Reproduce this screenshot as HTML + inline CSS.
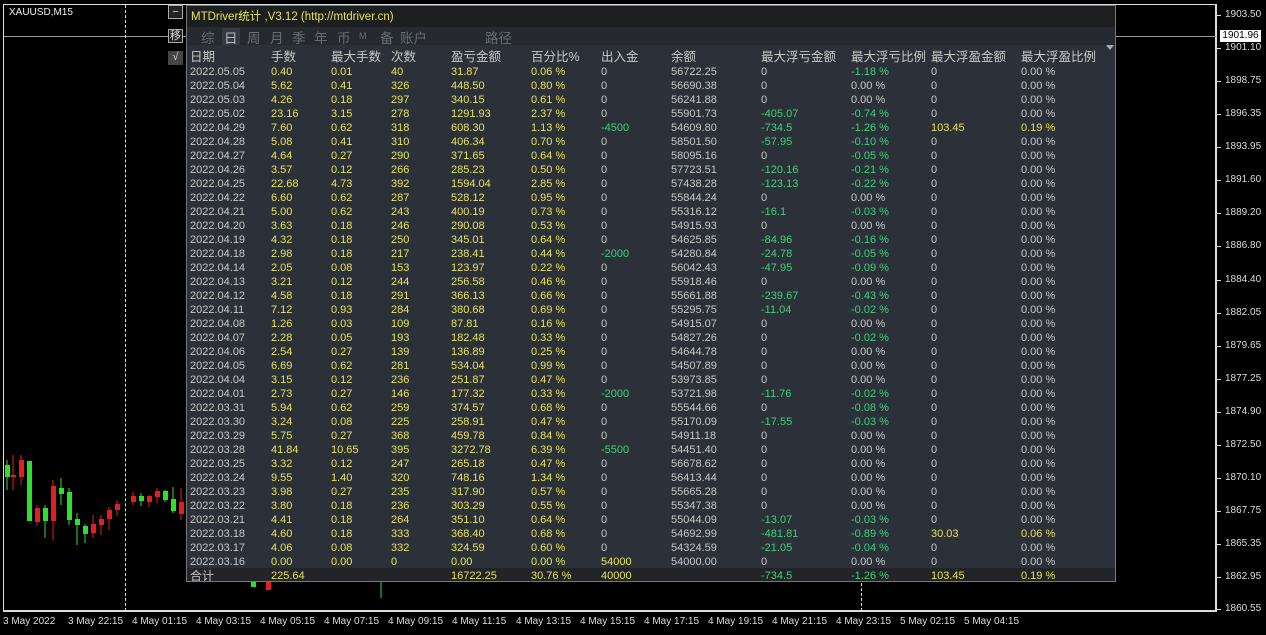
<!DOCTYPE html><html><head><meta charset="utf-8"><style>
body{margin:0;width:1266px;height:635px;background:#000;overflow:hidden;position:relative;font-family:"Liberation Sans","Noto Sans CJK SC",sans-serif;font-size:11px;color:#c8c8c8}
.abs{position:absolute}
#frame{left:3px;top:4px;width:1213px;height:607px;border:1px solid #ddd;position:absolute;box-sizing:border-box}
.pl{position:absolute;left:1225px;font-size:10px;color:#ddd}
.tk{position:absolute;left:1217px;width:4px;height:1px;background:#ddd}
.tl{position:absolute;top:616px;font-size:10px;color:#ddd;white-space:nowrap}
#panel{left:186px;top:5px;width:930px;height:577px;background:#2c3139;border:1px solid #777;box-sizing:border-box;position:absolute}
.r{position:absolute;left:0;height:14px;line-height:14px;width:928px;white-space:nowrap}
.r span{position:absolute}
.c1{left:3px}.c2{left:84px}.c3{left:144px}.c4{left:204px}.c5{left:264px}.c6{left:344px}.c7{left:414px}.c8{left:484px}.c9{left:574px}.c10{left:664px}.c11{left:744px}.c12{left:834px}
.y{color:#e4e45c}.g{color:#3fd07c}
.hd{font-size:12.5px;color:#c8c8c8}
.tb{position:absolute;top:21px;font-size:13.5px;color:#666c74}
.btn{position:absolute;left:168px;width:15px;height:14px;border:1px solid #aaa;color:#ddd;font-size:11px;text-align:center;line-height:13px;background:#222;box-sizing:border-box}
</style></head><body>
<div id="frame"></div>
<div class="abs" style="left:4px;top:36px;width:1212px;height:1px;background:#999"></div>
<div class="abs" style="left:125px;top:5px;height:606px;border-left:1px dashed #ddd"></div>
<div class="abs" style="left:861px;top:5px;height:606px;border-left:1px dashed #ddd"></div>
<div class="abs" style="left:9px;top:7px;color:#eee;font-size:10px">XAUUSD,M15</div>
<svg class="abs" style="left:0;top:440px" width="420" height="180">
<g stroke-width="1">
<line x1="7" y1="20" x2="7" y2="50" stroke="#2ee02e"/><rect x="5" y="25" width="5" height="12" fill="#2ee02e"/>
<line x1="13" y1="15" x2="13" y2="50" stroke="#e02020"/><rect x="11" y="35" width="5" height="2" fill="#e02020"/>
<line x1="21" y1="15" x2="21" y2="45" stroke="#e02020"/><rect x="19" y="20" width="5" height="17" fill="#e02020"/>
<rect x="27" y="21" width="5" height="60" fill="#2ee02e"/>
<line x1="37" y1="65" x2="37" y2="86" stroke="#e02020"/><rect x="35" y="68" width="5" height="14" fill="#e02020"/>
<line x1="45" y1="65" x2="45" y2="98" stroke="#2ee02e"/><rect x="43" y="68" width="5" height="13" fill="#2ee02e"/>
<line x1="53" y1="40" x2="53" y2="100" stroke="#e02020"/><rect x="51" y="46" width="5" height="35" fill="#e02020"/>
<line x1="61" y1="38" x2="61" y2="65" stroke="#2ee02e"/><rect x="59" y="48" width="5" height="6" fill="#2ee02e"/>
<line x1="69" y1="48" x2="69" y2="85" stroke="#2ee02e"/><rect x="67" y="52" width="5" height="28" fill="#2ee02e"/>
<line x1="77" y1="73" x2="77" y2="105" stroke="#2ee02e"/><rect x="75" y="79" width="5" height="6" fill="#2ee02e"/>
<line x1="85" y1="84" x2="85" y2="103" stroke="#2ee02e"/><rect x="83" y="86" width="5" height="8" fill="#2ee02e"/>
<line x1="93" y1="75" x2="93" y2="98" stroke="#e02020"/><rect x="91" y="84" width="5" height="9" fill="#e02020"/>
<line x1="101" y1="75" x2="101" y2="95" stroke="#e02020"/><rect x="99" y="79" width="5" height="6" fill="#e02020"/>
<line x1="109" y1="67" x2="109" y2="90" stroke="#e02020"/><rect x="107" y="70" width="5" height="9" fill="#e02020"/>
<line x1="117" y1="60" x2="117" y2="76" stroke="#e02020"/><rect x="115" y="64" width="5" height="6" fill="#e02020"/>
<line x1="133" y1="52" x2="133" y2="65" stroke="#e02020"/><rect x="131" y="56" width="5" height="6" fill="#e02020"/>
<line x1="141" y1="53" x2="141" y2="66" stroke="#2ee02e"/><rect x="139" y="56" width="5" height="5" fill="#2ee02e"/>
<line x1="149" y1="55" x2="149" y2="67" stroke="#e02020"/><rect x="147" y="56" width="5" height="6" fill="#e02020"/>
<line x1="157" y1="48" x2="157" y2="63" stroke="#e02020"/><rect x="155" y="51" width="5" height="6" fill="#e02020"/>
<line x1="165" y1="50" x2="165" y2="62" stroke="#2ee02e"/><rect x="163" y="51" width="5" height="9" fill="#2ee02e"/>
<line x1="173" y1="47" x2="173" y2="73" stroke="#2ee02e"/><rect x="171" y="59" width="5" height="12" fill="#2ee02e"/>
<line x1="181" y1="48" x2="181" y2="80" stroke="#e02020"/><rect x="179" y="62" width="5" height="12" fill="#e02020"/>
<rect x="251" y="142" width="5" height="5" fill="#2ee02e"/><rect x="266" y="142" width="5" height="8" fill="#e02020"/>
<line x1="381" y1="140" x2="381" y2="158" stroke="#2ee02e"/>
<line x1="630" y1="140" x2="630" y2="155" stroke="#2ee02e"/><line x1="637" y1="140" x2="637" y2="152" stroke="#e02020"/>
<line x1="780" y1="140" x2="780" y2="152" stroke="#e02020"/>
</g></svg>
<div class="abs" style="left:1216px;top:4px;width:1px;height:608px;background:#ddd"></div>
<div class="abs" style="left:3px;top:611px;width:1214px;height:1px;background:#ddd"></div>
<div class="tk" style="top:15px"></div><div class="pl" style="top:9px">1903.50</div>
<div class="abs" style="left:1220px;top:30px;width:41px;height:12px;background:#fff;color:#000;font-size:10px;line-height:12px;text-align:center">1901.96</div>
<div class="tk" style="top:48px"></div><div class="pl" style="top:42px">1901.10</div>
<div class="tk" style="top:81px"></div><div class="pl" style="top:75px">1898.75</div>
<div class="tk" style="top:114px"></div><div class="pl" style="top:108px">1896.35</div>
<div class="tk" style="top:147px"></div><div class="pl" style="top:141px">1893.95</div>
<div class="tk" style="top:180px"></div><div class="pl" style="top:174px">1891.60</div>
<div class="tk" style="top:213px"></div><div class="pl" style="top:207px">1889.20</div>
<div class="tk" style="top:246px"></div><div class="pl" style="top:240px">1886.80</div>
<div class="tk" style="top:280px"></div><div class="pl" style="top:274px">1884.40</div>
<div class="tk" style="top:313px"></div><div class="pl" style="top:307px">1882.05</div>
<div class="tk" style="top:346px"></div><div class="pl" style="top:340px">1879.65</div>
<div class="tk" style="top:379px"></div><div class="pl" style="top:373px">1877.25</div>
<div class="tk" style="top:412px"></div><div class="pl" style="top:406px">1874.90</div>
<div class="tk" style="top:445px"></div><div class="pl" style="top:439px">1872.50</div>
<div class="tk" style="top:478px"></div><div class="pl" style="top:472px">1870.10</div>
<div class="tk" style="top:511px"></div><div class="pl" style="top:505px">1867.75</div>
<div class="tk" style="top:544px"></div><div class="pl" style="top:538px">1865.35</div>
<div class="tk" style="top:577px"></div><div class="pl" style="top:571px">1862.95</div>
<div class="tk" style="top:609px"></div><div class="pl" style="top:603px">1860.55</div>
<div class="tl" style="left:3px">3 May 2022</div><div class="tl" style="left:68px">3 May 22:15</div><div class="tl" style="left:132px">4 May 01:15</div><div class="tl" style="left:196px">4 May 03:15</div><div class="tl" style="left:260px">4 May 05:15</div><div class="tl" style="left:324px">4 May 07:15</div><div class="tl" style="left:388px">4 May 09:15</div><div class="tl" style="left:452px">4 May 11:15</div><div class="tl" style="left:516px">4 May 13:15</div><div class="tl" style="left:580px">4 May 15:15</div><div class="tl" style="left:644px">4 May 17:15</div><div class="tl" style="left:708px">4 May 19:15</div><div class="tl" style="left:772px">4 May 21:15</div><div class="tl" style="left:836px">4 May 23:15</div><div class="tl" style="left:900px">5 May 02:15</div><div class="tl" style="left:964px">5 May 04:15</div>
<div class="btn" style="top:5px">−</div>
<div class="btn" style="top:29px">移</div>
<div class="btn" style="top:51px;border:none;background:#444">√</div>
<div id="panel">
<div class="abs" style="left:0;top:0;width:928px;height:21px;background:#1d1e20"></div>
<div class="abs" style="left:4px;top:2px;color:#e4e45c;font-size:11.5px">MTDriver统计 ,V3.12 (http://mtdriver.cn)</div>
<div class="abs" style="left:0;top:21px;width:928px;height:18px;background:#262a30"></div>
<div class="abs" style="left:35px;top:22px;width:18px;height:17px;background:#363b43"></div>
<span class="tb" style="left:14px">综</span><span class="tb" style="left:37px;color:#b8bcc2">日</span><span class="tb" style="left:60px">周</span><span class="tb" style="left:83px">月</span><span class="tb" style="left:105px">季</span><span class="tb" style="left:127px">年</span><span class="tb" style="left:150px">币</span><span class="tb" style="left:172px;font-size:9px;top:25px">M</span><span class="tb" style="left:193px">备</span><span class="tb" style="left:213px">账户</span><span class="tb" style="left:298px">路径</span>
<div class="abs" style="left:919px;top:39px;width:0;height:0;border-left:4px solid transparent;border-right:4px solid transparent;border-top:5px solid #aaa"></div>
<div class="r hd" style="top:44px"><span class="c1">日期</span><span class="c2">手数</span><span class="c3">最大手数</span><span class="c4">次数</span><span class="c5">盈亏金额</span><span class="c6">百分比%</span><span class="c7">出入金</span><span class="c8">余额</span><span class="c9">最大浮亏金额</span><span class="c10">最大浮亏比例</span><span class="c11">最大浮盈金额</span><span class="c12">最大浮盈比例</span></div>
<div class="r" style="top:59px"><span class="c1">2022.05.05</span><span class="c2 y">0.40</span><span class="c3 y">0.01</span><span class="c4 y">40</span><span class="c5 y">31.87</span><span class="c6 y">0.06 %</span><span class="c7">0</span><span class="c8">56722.25</span><span class="c9">0</span><span class="c10 g">-1.18 %</span><span class="c11">0</span><span class="c12">0.00 %</span></div>
<div class="r" style="top:73px"><span class="c1">2022.05.04</span><span class="c2 y">5.62</span><span class="c3 y">0.41</span><span class="c4 y">326</span><span class="c5 y">448.50</span><span class="c6 y">0.80 %</span><span class="c7">0</span><span class="c8">56690.38</span><span class="c9">0</span><span class="c10">0.00 %</span><span class="c11">0</span><span class="c12">0.00 %</span></div>
<div class="r" style="top:87px"><span class="c1">2022.05.03</span><span class="c2 y">4.26</span><span class="c3 y">0.18</span><span class="c4 y">297</span><span class="c5 y">340.15</span><span class="c6 y">0.61 %</span><span class="c7">0</span><span class="c8">56241.88</span><span class="c9">0</span><span class="c10">0.00 %</span><span class="c11">0</span><span class="c12">0.00 %</span></div>
<div class="r" style="top:101px"><span class="c1">2022.05.02</span><span class="c2 y">23.16</span><span class="c3 y">3.15</span><span class="c4 y">278</span><span class="c5 y">1291.93</span><span class="c6 y">2.37 %</span><span class="c7">0</span><span class="c8">55901.73</span><span class="c9 g">-405.07</span><span class="c10 g">-0.74 %</span><span class="c11">0</span><span class="c12">0.00 %</span></div>
<div class="r" style="top:115px"><span class="c1">2022.04.29</span><span class="c2 y">7.60</span><span class="c3 y">0.62</span><span class="c4 y">318</span><span class="c5 y">608.30</span><span class="c6 y">1.13 %</span><span class="c7 g">-4500</span><span class="c8">54609.80</span><span class="c9 g">-734.5</span><span class="c10 g">-1.26 %</span><span class="c11 y">103.45</span><span class="c12 y">0.19 %</span></div>
<div class="r" style="top:129px"><span class="c1">2022.04.28</span><span class="c2 y">5.08</span><span class="c3 y">0.41</span><span class="c4 y">310</span><span class="c5 y">406.34</span><span class="c6 y">0.70 %</span><span class="c7">0</span><span class="c8">58501.50</span><span class="c9 g">-57.95</span><span class="c10 g">-0.10 %</span><span class="c11">0</span><span class="c12">0.00 %</span></div>
<div class="r" style="top:143px"><span class="c1">2022.04.27</span><span class="c2 y">4.64</span><span class="c3 y">0.27</span><span class="c4 y">290</span><span class="c5 y">371.65</span><span class="c6 y">0.64 %</span><span class="c7">0</span><span class="c8">58095.16</span><span class="c9">0</span><span class="c10 g">-0.05 %</span><span class="c11">0</span><span class="c12">0.00 %</span></div>
<div class="r" style="top:157px"><span class="c1">2022.04.26</span><span class="c2 y">3.57</span><span class="c3 y">0.12</span><span class="c4 y">266</span><span class="c5 y">285.23</span><span class="c6 y">0.50 %</span><span class="c7">0</span><span class="c8">57723.51</span><span class="c9 g">-120.16</span><span class="c10 g">-0.21 %</span><span class="c11">0</span><span class="c12">0.00 %</span></div>
<div class="r" style="top:171px"><span class="c1">2022.04.25</span><span class="c2 y">22.68</span><span class="c3 y">4.73</span><span class="c4 y">392</span><span class="c5 y">1594.04</span><span class="c6 y">2.85 %</span><span class="c7">0</span><span class="c8">57438.28</span><span class="c9 g">-123.13</span><span class="c10 g">-0.22 %</span><span class="c11">0</span><span class="c12">0.00 %</span></div>
<div class="r" style="top:185px"><span class="c1">2022.04.22</span><span class="c2 y">6.60</span><span class="c3 y">0.62</span><span class="c4 y">287</span><span class="c5 y">528.12</span><span class="c6 y">0.95 %</span><span class="c7">0</span><span class="c8">55844.24</span><span class="c9">0</span><span class="c10">0.00 %</span><span class="c11">0</span><span class="c12">0.00 %</span></div>
<div class="r" style="top:199px"><span class="c1">2022.04.21</span><span class="c2 y">5.00</span><span class="c3 y">0.62</span><span class="c4 y">243</span><span class="c5 y">400.19</span><span class="c6 y">0.73 %</span><span class="c7">0</span><span class="c8">55316.12</span><span class="c9 g">-16.1</span><span class="c10 g">-0.03 %</span><span class="c11">0</span><span class="c12">0.00 %</span></div>
<div class="r" style="top:213px"><span class="c1">2022.04.20</span><span class="c2 y">3.63</span><span class="c3 y">0.18</span><span class="c4 y">246</span><span class="c5 y">290.08</span><span class="c6 y">0.53 %</span><span class="c7">0</span><span class="c8">54915.93</span><span class="c9">0</span><span class="c10">0.00 %</span><span class="c11">0</span><span class="c12">0.00 %</span></div>
<div class="r" style="top:227px"><span class="c1">2022.04.19</span><span class="c2 y">4.32</span><span class="c3 y">0.18</span><span class="c4 y">250</span><span class="c5 y">345.01</span><span class="c6 y">0.64 %</span><span class="c7">0</span><span class="c8">54625.85</span><span class="c9 g">-84.96</span><span class="c10 g">-0.16 %</span><span class="c11">0</span><span class="c12">0.00 %</span></div>
<div class="r" style="top:241px"><span class="c1">2022.04.18</span><span class="c2 y">2.98</span><span class="c3 y">0.18</span><span class="c4 y">217</span><span class="c5 y">238.41</span><span class="c6 y">0.44 %</span><span class="c7 g">-2000</span><span class="c8">54280.84</span><span class="c9 g">-24.78</span><span class="c10 g">-0.05 %</span><span class="c11">0</span><span class="c12">0.00 %</span></div>
<div class="r" style="top:255px"><span class="c1">2022.04.14</span><span class="c2 y">2.05</span><span class="c3 y">0.08</span><span class="c4 y">153</span><span class="c5 y">123.97</span><span class="c6 y">0.22 %</span><span class="c7">0</span><span class="c8">56042.43</span><span class="c9 g">-47.95</span><span class="c10 g">-0.09 %</span><span class="c11">0</span><span class="c12">0.00 %</span></div>
<div class="r" style="top:269px"><span class="c1">2022.04.13</span><span class="c2 y">3.21</span><span class="c3 y">0.12</span><span class="c4 y">244</span><span class="c5 y">256.58</span><span class="c6 y">0.46 %</span><span class="c7">0</span><span class="c8">55918.46</span><span class="c9">0</span><span class="c10">0.00 %</span><span class="c11">0</span><span class="c12">0.00 %</span></div>
<div class="r" style="top:283px"><span class="c1">2022.04.12</span><span class="c2 y">4.58</span><span class="c3 y">0.18</span><span class="c4 y">291</span><span class="c5 y">366.13</span><span class="c6 y">0.66 %</span><span class="c7">0</span><span class="c8">55661.88</span><span class="c9 g">-239.67</span><span class="c10 g">-0.43 %</span><span class="c11">0</span><span class="c12">0.00 %</span></div>
<div class="r" style="top:297px"><span class="c1">2022.04.11</span><span class="c2 y">7.12</span><span class="c3 y">0.93</span><span class="c4 y">284</span><span class="c5 y">380.68</span><span class="c6 y">0.69 %</span><span class="c7">0</span><span class="c8">55295.75</span><span class="c9 g">-11.04</span><span class="c10 g">-0.02 %</span><span class="c11">0</span><span class="c12">0.00 %</span></div>
<div class="r" style="top:311px"><span class="c1">2022.04.08</span><span class="c2 y">1.26</span><span class="c3 y">0.03</span><span class="c4 y">109</span><span class="c5 y">87.81</span><span class="c6 y">0.16 %</span><span class="c7">0</span><span class="c8">54915.07</span><span class="c9">0</span><span class="c10">0.00 %</span><span class="c11">0</span><span class="c12">0.00 %</span></div>
<div class="r" style="top:325px"><span class="c1">2022.04.07</span><span class="c2 y">2.28</span><span class="c3 y">0.05</span><span class="c4 y">193</span><span class="c5 y">182.48</span><span class="c6 y">0.33 %</span><span class="c7">0</span><span class="c8">54827.26</span><span class="c9">0</span><span class="c10 g">-0.02 %</span><span class="c11">0</span><span class="c12">0.00 %</span></div>
<div class="r" style="top:339px"><span class="c1">2022.04.06</span><span class="c2 y">2.54</span><span class="c3 y">0.27</span><span class="c4 y">139</span><span class="c5 y">136.89</span><span class="c6 y">0.25 %</span><span class="c7">0</span><span class="c8">54644.78</span><span class="c9">0</span><span class="c10">0.00 %</span><span class="c11">0</span><span class="c12">0.00 %</span></div>
<div class="r" style="top:353px"><span class="c1">2022.04.05</span><span class="c2 y">6.69</span><span class="c3 y">0.62</span><span class="c4 y">281</span><span class="c5 y">534.04</span><span class="c6 y">0.99 %</span><span class="c7">0</span><span class="c8">54507.89</span><span class="c9">0</span><span class="c10">0.00 %</span><span class="c11">0</span><span class="c12">0.00 %</span></div>
<div class="r" style="top:367px"><span class="c1">2022.04.04</span><span class="c2 y">3.15</span><span class="c3 y">0.12</span><span class="c4 y">236</span><span class="c5 y">251.87</span><span class="c6 y">0.47 %</span><span class="c7">0</span><span class="c8">53973.85</span><span class="c9">0</span><span class="c10">0.00 %</span><span class="c11">0</span><span class="c12">0.00 %</span></div>
<div class="r" style="top:381px"><span class="c1">2022.04.01</span><span class="c2 y">2.73</span><span class="c3 y">0.27</span><span class="c4 y">146</span><span class="c5 y">177.32</span><span class="c6 y">0.33 %</span><span class="c7 g">-2000</span><span class="c8">53721.98</span><span class="c9 g">-11.76</span><span class="c10 g">-0.02 %</span><span class="c11">0</span><span class="c12">0.00 %</span></div>
<div class="r" style="top:395px"><span class="c1">2022.03.31</span><span class="c2 y">5.94</span><span class="c3 y">0.62</span><span class="c4 y">259</span><span class="c5 y">374.57</span><span class="c6 y">0.68 %</span><span class="c7">0</span><span class="c8">55544.66</span><span class="c9">0</span><span class="c10 g">-0.08 %</span><span class="c11">0</span><span class="c12">0.00 %</span></div>
<div class="r" style="top:409px"><span class="c1">2022.03.30</span><span class="c2 y">3.24</span><span class="c3 y">0.08</span><span class="c4 y">225</span><span class="c5 y">258.91</span><span class="c6 y">0.47 %</span><span class="c7">0</span><span class="c8">55170.09</span><span class="c9 g">-17.55</span><span class="c10 g">-0.03 %</span><span class="c11">0</span><span class="c12">0.00 %</span></div>
<div class="r" style="top:423px"><span class="c1">2022.03.29</span><span class="c2 y">5.75</span><span class="c3 y">0.27</span><span class="c4 y">368</span><span class="c5 y">459.78</span><span class="c6 y">0.84 %</span><span class="c7">0</span><span class="c8">54911.18</span><span class="c9">0</span><span class="c10">0.00 %</span><span class="c11">0</span><span class="c12">0.00 %</span></div>
<div class="r" style="top:437px"><span class="c1">2022.03.28</span><span class="c2 y">41.84</span><span class="c3 y">10.65</span><span class="c4 y">395</span><span class="c5 y">3272.78</span><span class="c6 y">6.39 %</span><span class="c7 g">-5500</span><span class="c8">54451.40</span><span class="c9">0</span><span class="c10">0.00 %</span><span class="c11">0</span><span class="c12">0.00 %</span></div>
<div class="r" style="top:451px"><span class="c1">2022.03.25</span><span class="c2 y">3.32</span><span class="c3 y">0.12</span><span class="c4 y">247</span><span class="c5 y">265.18</span><span class="c6 y">0.47 %</span><span class="c7">0</span><span class="c8">56678.62</span><span class="c9">0</span><span class="c10">0.00 %</span><span class="c11">0</span><span class="c12">0.00 %</span></div>
<div class="r" style="top:465px"><span class="c1">2022.03.24</span><span class="c2 y">9.55</span><span class="c3 y">1.40</span><span class="c4 y">320</span><span class="c5 y">748.16</span><span class="c6 y">1.34 %</span><span class="c7">0</span><span class="c8">56413.44</span><span class="c9">0</span><span class="c10">0.00 %</span><span class="c11">0</span><span class="c12">0.00 %</span></div>
<div class="r" style="top:479px"><span class="c1">2022.03.23</span><span class="c2 y">3.98</span><span class="c3 y">0.27</span><span class="c4 y">235</span><span class="c5 y">317.90</span><span class="c6 y">0.57 %</span><span class="c7">0</span><span class="c8">55665.28</span><span class="c9">0</span><span class="c10">0.00 %</span><span class="c11">0</span><span class="c12">0.00 %</span></div>
<div class="r" style="top:493px"><span class="c1">2022.03.22</span><span class="c2 y">3.80</span><span class="c3 y">0.18</span><span class="c4 y">236</span><span class="c5 y">303.29</span><span class="c6 y">0.55 %</span><span class="c7">0</span><span class="c8">55347.38</span><span class="c9">0</span><span class="c10">0.00 %</span><span class="c11">0</span><span class="c12">0.00 %</span></div>
<div class="r" style="top:507px"><span class="c1">2022.03.21</span><span class="c2 y">4.41</span><span class="c3 y">0.18</span><span class="c4 y">264</span><span class="c5 y">351.10</span><span class="c6 y">0.64 %</span><span class="c7">0</span><span class="c8">55044.09</span><span class="c9 g">-13.07</span><span class="c10 g">-0.03 %</span><span class="c11">0</span><span class="c12">0.00 %</span></div>
<div class="r" style="top:521px"><span class="c1">2022.03.18</span><span class="c2 y">4.60</span><span class="c3 y">0.18</span><span class="c4 y">333</span><span class="c5 y">368.40</span><span class="c6 y">0.68 %</span><span class="c7">0</span><span class="c8">54692.99</span><span class="c9 g">-481.81</span><span class="c10 g">-0.89 %</span><span class="c11 y">30.03</span><span class="c12 y">0.06 %</span></div>
<div class="r" style="top:535px"><span class="c1">2022.03.17</span><span class="c2 y">4.06</span><span class="c3 y">0.08</span><span class="c4 y">332</span><span class="c5 y">324.59</span><span class="c6 y">0.60 %</span><span class="c7">0</span><span class="c8">54324.59</span><span class="c9 g">-21.05</span><span class="c10 g">-0.04 %</span><span class="c11">0</span><span class="c12">0.00 %</span></div>
<div class="r" style="top:549px"><span class="c1">2022.03.16</span><span class="c2 y">0.00</span><span class="c3 y">0.00</span><span class="c4 y">0</span><span class="c5 y">0.00</span><span class="c6 y">0.00 %</span><span class="c7 y">54000</span><span class="c8">54000.00</span><span class="c9">0</span><span class="c10">0.00 %</span><span class="c11">0</span><span class="c12">0.00 %</span></div>
<div class="abs" style="left:0;top:562px;width:928px;height:13px;background:#222428"></div>
<div class="r" style="top:563px"><span class="c1" style="font-size:12px">合计</span><span class="c2 y">225.64</span><span class="c5 y">16722.25</span><span class="c6 y">30.76 %</span><span class="c7 y">40000</span><span class="c9 g">-734.5</span><span class="c10 g">-1.26 %</span><span class="c11 y">103.45</span><span class="c12 y">0.19 %</span></div>
</div>
</body></html>
